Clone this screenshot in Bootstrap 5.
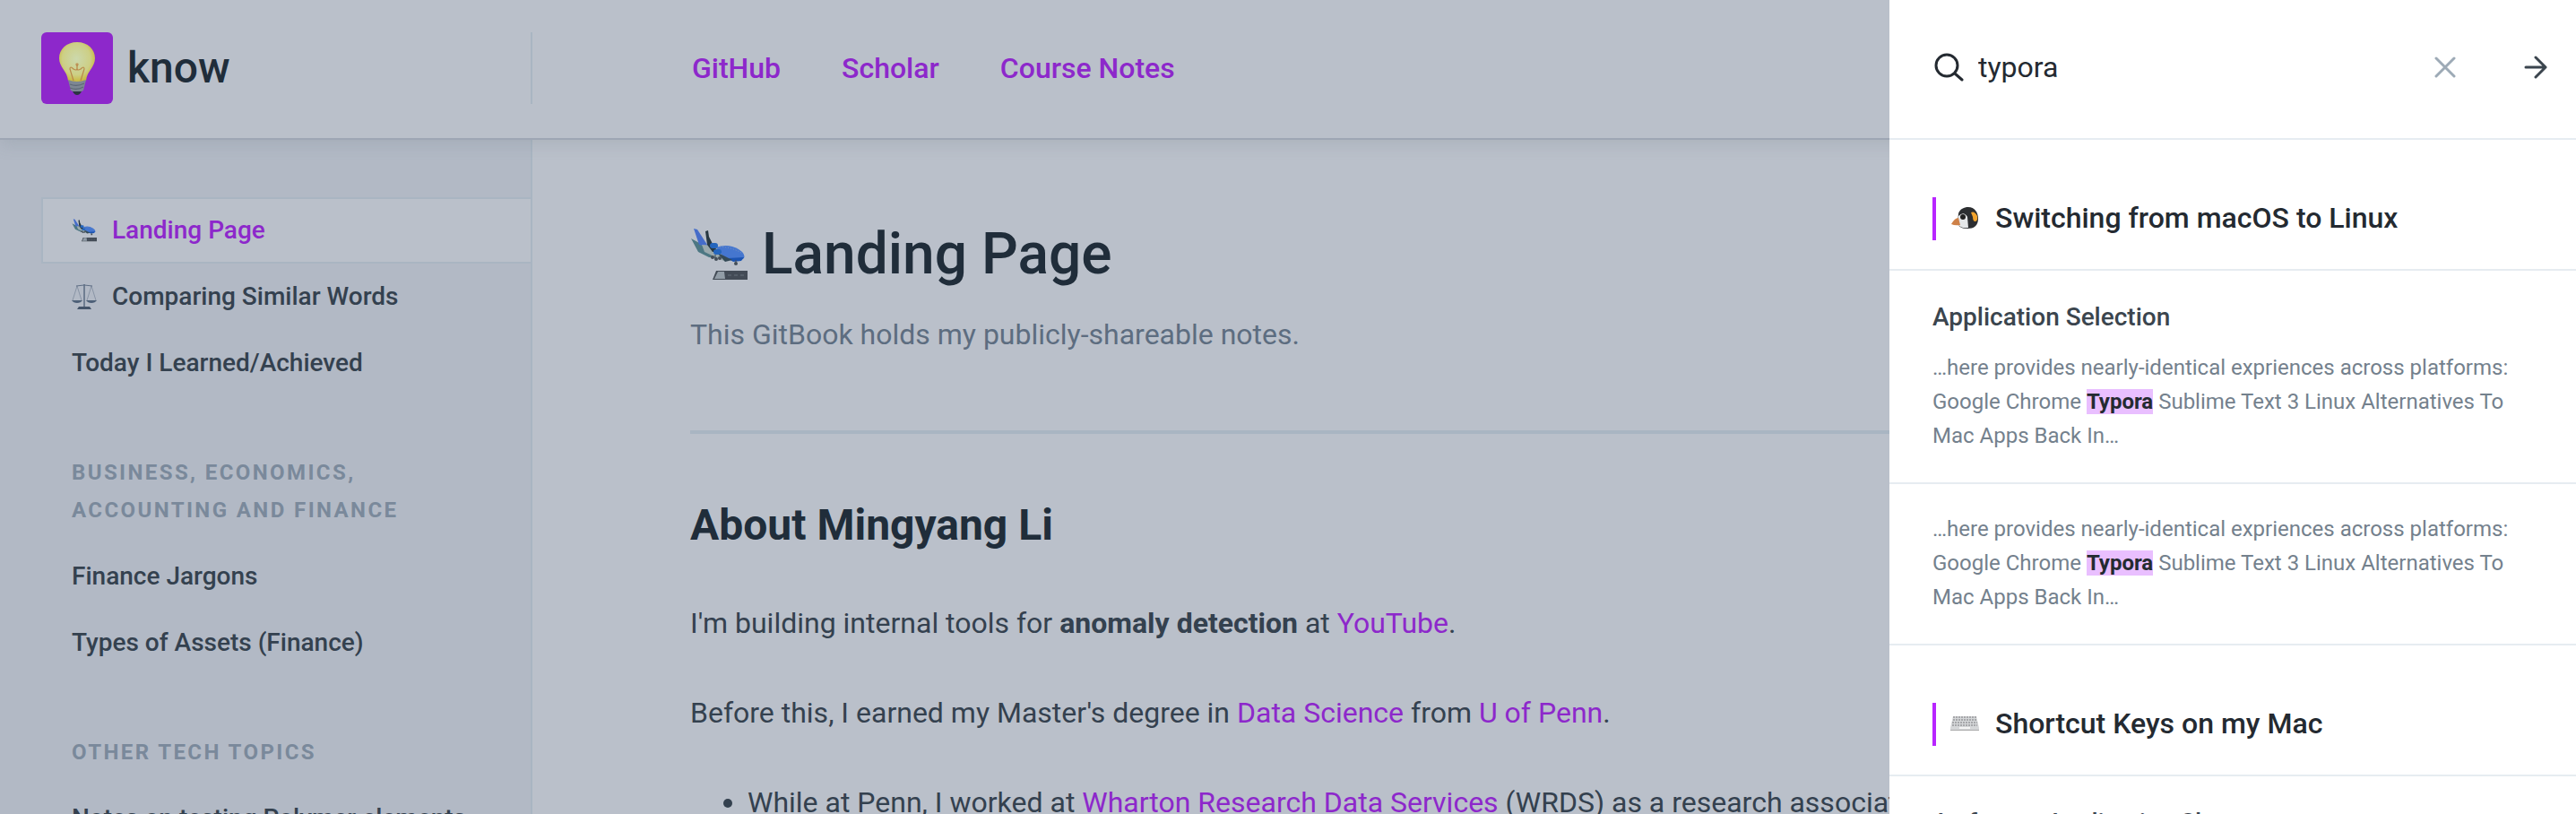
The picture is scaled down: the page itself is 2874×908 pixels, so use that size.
<!DOCTYPE html>
<html lang="en">
<head>
<meta charset="utf-8">
<meta name="viewport" content="width=device-width, initial-scale=1">
<title>know - Landing Page</title>
<link rel="stylesheet" href="https://cdn.jsdelivr.net/npm/bootstrap@5.3.0/dist/css/bootstrap.min.css">
<style>
:root { --purple: #8d28cb; --ink: #202d3a; --text: #34414f; --muted: #5d6d80; --line: #a9b5c2; --page: #bac0ca; --rail: #b2b9c5; }
html, body { height: 100%; }
body { font-family: Roboto, "Liberation Sans", sans-serif; font-size: 32px; line-height: 50px; color: var(--text); background: var(--page); overflow: hidden; }
a { color: var(--purple); text-decoration: none; }
a:hover { color: var(--purple); }
svg { display: block; flex: none; }
.topbar { flex: none; height: 156px; border-bottom: 2px solid #9ea6b4; background: var(--page); box-shadow: 0 6px 16px rgba(116, 129, 141, .2); z-index: 2; padding-bottom: 2px; }
.brand-cell { width: 594px; height: 80px; padding-left: 46px; border-right: 2px solid var(--line); }
.brand-logo { width: 80px; height: 80px; border-radius: 6px; background: var(--purple); }
.brand-name { font-size: 48px; font-weight: 500; color: var(--ink); }
.top-links { padding-left: 178px; gap: 68px; font-weight: 500; }
.rail { width: 594px; flex: none; background: var(--rail); border-right: 2px solid var(--line); padding: 64px 0 0 46px; }
.rail-link { display: flex; align-items: center; height: 74px; padding: 0 32px; border: 2px solid transparent; border-right: 0; font-size: 28px; font-weight: 500; color: var(--text); white-space: nowrap; }
.rail-link.current { background: var(--page); border-color: var(--line); color: var(--purple); }
.rail-link svg { margin-right: 17px; }
.rail-title { font-size: 24px; line-height: 42px; font-weight: 700; letter-spacing: .1em; color: #7a899b; text-transform: uppercase; padding: 0 34px; margin: 64px 0 16px; }
.doc { padding: 92px 0 0 176px; white-space: nowrap; min-width: 0; }
.doc h1 { font-size: 64px; line-height: 72px; font-weight: 500; color: var(--ink); gap: 16px; margin-bottom: 28px; }
.doc-desc { color: var(--muted); margin-bottom: 82px; }
.doc-rule { border-top: 4px solid var(--line); margin-bottom: 70px; }
.doc h2 { font-size: 48px; line-height: 64px; font-weight: 700; color: var(--ink); margin-bottom: 52px; }
.doc p.para { margin-bottom: 50px; }
.doc ul { padding-left: 64px; }
.finder { top: 0; right: 0; bottom: 0; width: 766px; background: #fff; z-index: 3; color: #242a31; overflow: hidden; }
.finder-bar { height: 156px; border-bottom: 2px solid #e6ecf1; padding: 0 32px 4px 50px; }
.finder-bar input { flex: 1; min-width: 0; border: 0; outline: 0; background: none; padding: 0; color: #242a31; }
.finder-bar button { border: 0; background: none; padding: 0; }
.clear-btn { margin-right: 76px; }
.hit-head { height: 146px; padding: 64px 48px 0; border-bottom: 2px solid #e6ecf1; }
.hit-head h2 { height: 48px; border-left: 4px solid #b825ff; padding-left: 16px; margin: 0; font-size: 32px; line-height: 46px; padding-bottom: 2px; font-weight: 500; }
.hit-head svg { margin-right: 18px; }
.hit { display: block; padding: 31px 48px 33px; border-bottom: 2px solid #e6ecf1; font-size: 24px; line-height: 38px; color: #74818d; }
.hit h3 { font-size: 28px; line-height: 42px; font-weight: 500; color: #3b454e; margin: 0 0 16px; }
.hit p { margin: 0; }
.hit:hover { color: #74818d; }
.hit b { background: #e9bfff; color: #242a31; font-weight: 700; }
</style>
</head>
<body class="d-flex flex-column">
<svg width="0" height="0" class="position-absolute" aria-hidden="true">
  <symbol id="plane" viewBox="0 0 64 64">
    <path d="M1 14 12 20 30 29 30 36 21 35 9 29Z" fill="#4d7783"/>
    <path d="M4 3 8 4 21 24 10 21Z" fill="#456cc9"/>
    <path d="M13 21 30 22 46 37 37 39 16 29Z" fill="#9aa9ad"/>
    <path d="M17 6 20 5 21 12 27 24 33 29 25 29 19 21Z" fill="#273843"/>
    <path d="M29 24Q42 19 54 26Q62 31 60 36Q57 39 49 39L39 37Z" fill="#4576cf"/>
    <path d="M42 36 60 35 57 39 48 40Z" fill="#1c54b2"/>
    <path d="M33 23Q47 24 57 30" fill="none" stroke="#8199bf" stroke-dasharray="1 2"/>
    <path d="M29 29 47 38 39 40Z" fill="#344a56"/>
    <rect x="22" y="19" width="9" height="6" rx="3" fill="#2465bd"/><rect x="26" y="26" width="9" height="6" rx="3" fill="#2465bd"/>
    <g fill="#434d58"><circle cx="25" cy="35" r="2"/><circle cx="29" cy="37" r="2"/><circle cx="33" cy="36" r="2"/><circle cx="51" cy="42" r="2"/></g>
    <path d="M28 32v4M51 38v4" stroke="#434d58"/>
    <path d="M29 50H64V60H25Z" fill="#434b56"/>
    <path d="M31 51H38L39 59H27Z" fill="#929da7"/>
    <path d="M42 55H63" stroke="#67717b" stroke-dasharray="4 3"/>
  </symbol>
</svg>

<header class="topbar d-flex align-items-center position-relative">
  <a class="brand-cell d-flex align-items-center gap-3" href="#">
    <span class="brand-logo d-flex align-items-center justify-content-center">
      <svg width="42" height="60" viewBox="0 0 42 60" aria-hidden="true">
        <defs><radialGradient id="glow" cx=".48" cy=".42" r=".6"><stop stop-color="#ccd8ad"/><stop offset=".65" stop-color="#cdcf85"/><stop offset="1" stop-color="#c8b32d"/></radialGradient></defs>
        <path d="M21 1C9 1 1 9 1 19C1 29 10 33 11 44Q21 48 31 44C32 33 41 29 41 19C41 9 33 1 21 1Z" fill="url(#glow)"/>
        <path d="M17 44 13 31Q13 27 17 31Q22 34 21 28Q19 25 21 25Q23 25 21 28Q20 34 25 31Q29 27 29 31L25 44" fill="none" stroke="#ba8749" stroke-width="1.2"/>
        <path d="M11 43Q21 47 31 43L28 55Q21 59 14 55Z" fill="#7d8794"/>
        <path d="M13 48Q21 51 29 47M13 52Q21 55 28 51" fill="none" stroke="#5d6875" stroke-width="1.2"/>
        <path d="M16 56H26Q24 60 21 60T16 56Z" fill="#2c3543"/>
      </svg>
    </span>
    <span class="brand-name">know</span>
  </a>
  <nav class="top-links d-flex" aria-label="Links">
    <a href="#">GitHub</a><a href="#">Scholar</a><a href="#">Course Notes</a>
  </nav>
</header>

<div class="d-flex flex-grow-1 overflow-hidden">
  <nav class="rail overflow-hidden" aria-label="Contents">
    <a class="rail-link current" href="#"><svg width="28" height="28" aria-hidden="true"><use href="#plane"/></svg>Landing Page</a>
    <a class="rail-link" href="#"><svg width="28" height="28" viewBox="0 0 28 28" aria-hidden="true" fill="none" stroke="#5f6f85">
      <path d="M5 2Q14 0 23 2"/><path d="M14 0V26" stroke-width="1.6"/><path d="M6 2 1 18M6 2 11 18M22 2 17 18M22 2 27 18" stroke-width=".5"/>
      <path d="M0 18H12Q10 21 6 21T0 18ZM16 18H28Q26 21 22 21T16 18Z" fill="#4d6078" stroke="none"/><path d="M8 25H20L22 28H6Z" fill="#44546a" stroke="none"/></svg>Comparing Similar Words</a>
    <a class="rail-link" href="#">Today I Learned/Achieved</a>
    <h2 class="rail-title">Business, Economics,<br>Accounting and Finance</h2>
    <a class="rail-link" href="#">Finance Jargons</a>
    <a class="rail-link" href="#">Types of Assets (Finance)</a>
    <h2 class="rail-title">Other tech topics</h2>
    <a class="rail-link" href="#">Notes on testing Polymer elements</a>
  </nav>
  <main class="doc flex-grow-1 overflow-hidden">
    <h1 class="d-flex align-items-center"><svg width="64" height="64" aria-hidden="true"><use href="#plane"/></svg>Landing Page</h1>
    <p class="doc-desc">This GitBook holds my publicly-shareable notes.</p>
    <div class="doc-rule"></div>
    <h2>About Mingyang Li</h2>
    <p class="para">I'm building internal tools for <strong>anomaly detection</strong> at <a href="#">YouTube</a>.</p>
    <p class="para">Before this, I earned my Master's degree in <a href="#">Data Science</a> from <a href="#">U of Penn</a>.</p>
    <ul><li>While at Penn, I worked at <a href="#">Wharton Research Data Services</a> (WRDS) as a research associate</li></ul>
  </main>
</div>

<aside class="finder position-absolute" aria-label="Search results">
  <form class="finder-bar d-flex align-items-center" role="search">
    <label for="query" class="me-3"><svg width="33" height="32" viewBox="0 0 33 32" fill="none" stroke="#242a31" stroke-width="3" stroke-linecap="round" role="img" aria-label="Search"><circle cx="14" cy="14" r="12"/><path d="M23 23 31 30"/></svg></label>
    <input id="query" type="text" value="typora">
    <button type="button" aria-label="Clear" class="clear-btn"><svg width="24" height="24" viewBox="0 0 24 24" stroke="#9daab6" stroke-width="3" stroke-linecap="round"><path d="M2 2 22 22M22 2 2 22"/></svg></button>
    <button type="button" aria-label="Close search"><svg width="26" height="26" viewBox="0 0 26 26" fill="none" stroke="#3b454e" stroke-width="3" stroke-linecap="round" stroke-linejoin="round"><path d="M2 13H24M13 2 24 13 13 24"/></svg></button>
  </form>
  <div class="hit-head"><h2 class="d-flex align-items-center"><svg width="32" height="26" viewBox="0 0 32 26" aria-hidden="true">
    <path d="M9 8C11 3 15 1 20 1C27 1 31 7 31 14C31 22 26 25 19 25C13 25 9 23 8 19Z" fill="#2c2e31"/><path d="M23 7Q27 5 30 11Q31 17 27 17Q25 16 25 12Z" fill="#f2a42e"/>
    <path d="M9 11Q15 5 19 12L20 24Q11 25 8 20Z" fill="#e5e7e9"/><circle cx="14" cy="12" r="3" fill="#222"/><path d="M1 20Q5 13 9 13L11 21Q5 22 1 20Z" fill="#ce8148"/></svg>Switching from macOS to Linux</h2></div>
  <a class="hit" href="#"><h3>Application Selection</h3><p>…here provides nearly-identical expriences across platforms: Google Chrome <b>Typora</b> Sublime Text 3 Linux Alternatives To Mac Apps Back In…</p></a>
  <a class="hit" href="#"><p>…here provides nearly-identical expriences across platforms: Google Chrome <b>Typora</b> Sublime Text 3 Linux Alternatives To Mac Apps Back In…</p></a>
  <div class="hit-head"><h2 class="d-flex align-items-center"><svg width="32" height="16" viewBox="0 0 32 16" aria-hidden="true"><path d="M3 0H29L32 13V16H0V13Z" fill="#d5d7d9"/><path d="M3 1H29M3 4H29M2 7H30M2 10H30" stroke="#96989b" stroke-width="1.4" stroke-dasharray="2 1"/><path d="M10 13H22" stroke="#f4f4f4" stroke-width="2"/><path d="M0 15.5H32" stroke="#aaa"/></svg>Shortcut Keys on my Mac</h2></div>
  <a class="hit" href="#"><h3>As for my Application Shortcuts</h3></a>
</aside>
<script src="https://cdn.jsdelivr.net/npm/bootstrap@5.3.0/dist/js/bootstrap.bundle.min.js"></script>
</body>
</html>
